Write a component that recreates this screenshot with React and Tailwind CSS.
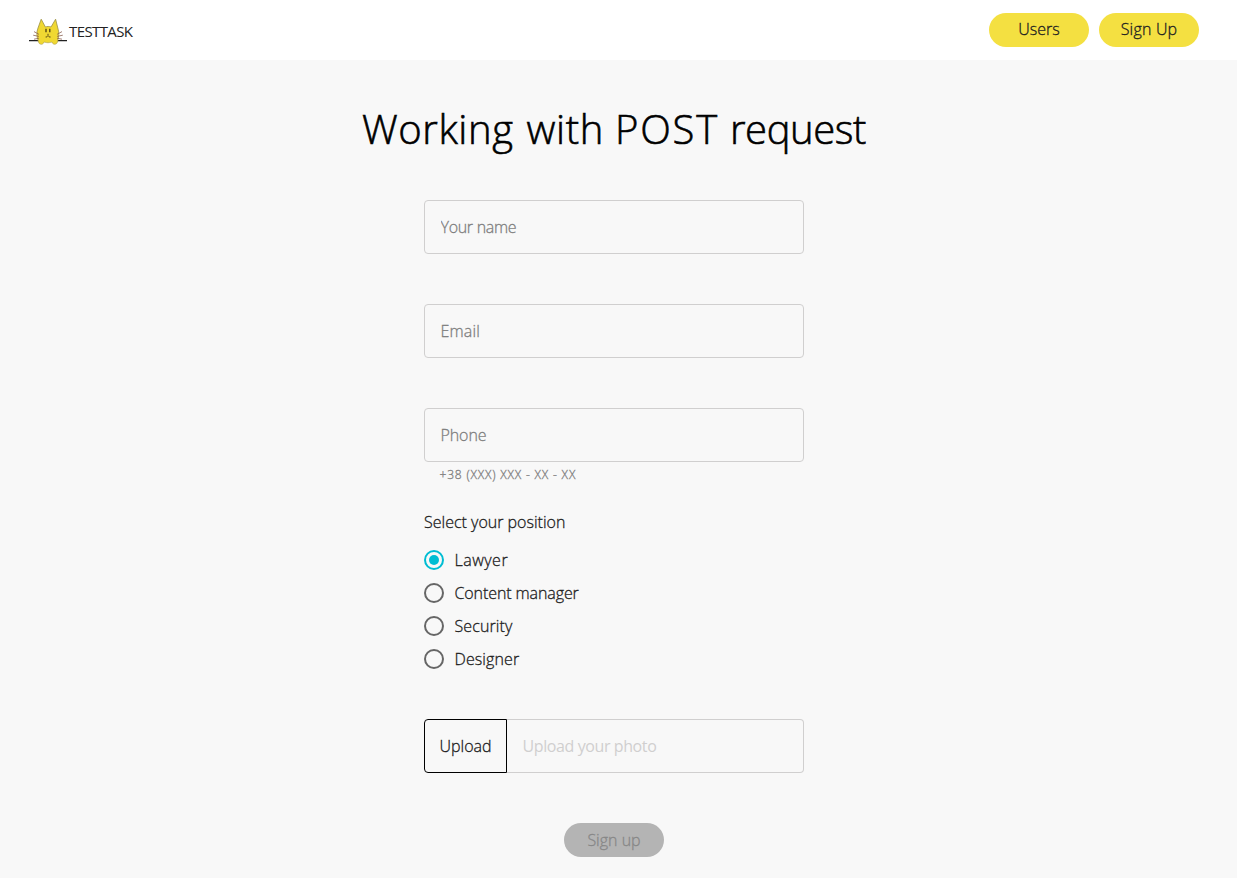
import { useState } from "react";

const positions = [
  { name: "Lawyer", tracking: "tracking-[0.5px]" },
  { name: "Content manager", tracking: "tracking-[-0.1px]" },
  { name: "Security", tracking: "tracking-[0.1px]" },
  { name: "Designer", tracking: "tracking-[0.1px]" },
];

function CatLogo() {
  return (
    <svg className="h-7 w-[38px]" viewBox="0 0 38 28" fill="none">
      <path d="M0 22.6H38" stroke="#222" strokeWidth="1.2" />
      <path
        d="M9.4 23C7.6 19 7.4 14 9 10L12.2 1.2L16.4 9C18 8.3 20.5 8.3 22 9L26.6 1.2L28.8 10C30.2 14 30 19 28.6 23Z"
        fill="#f0d832"
        stroke="#9a8f42"
        strokeWidth=".8"
      />
      <path
        d="M9.2 22C9 26.8 13.6 27.8 15.2 24C18 25 20 25 22.8 24C24.4 27.8 29 26.8 28.8 22Z"
        fill="#f0d832"
      />
      <path
        d="M9.2 22C9 26.8 13.6 27.8 15.2 24C18 25 20 25 22.8 24C24.4 27.8 29 26.8 28.8 22"
        stroke="#9a8f42"
        strokeWidth=".5"
      />
      <path d="M17 10.8V14.2M20.8 10.8V14.2" stroke="#4c3e12" strokeWidth="1.3" />
      <path d="M19 15.8V17.6M16.6 19C17.6 19.6 18.6 17.8 19 17.6C19.4 17.8 20.4 19.6 21.6 19" stroke="#4c3e12" strokeWidth=".9" />
      <path
        d="M5 13.6L10 16.4M4.2 17.2L10 18.4M5 21.2L10 20.2M33 13.6L28 16.4M33.8 17.2L28 18.4M33 21.2L28 20.2"
        stroke="#8b6252"
        strokeWidth=".8"
      />
    </svg>
  );
}

function Field({ label, type, tracking }) {
  return (
    <input
      type={type}
      placeholder={label}
      className={
        "block h-[54px] w-full rounded border border-[#d0cfcf] bg-[#f8f8f8] pr-4 pl-[15.5px] text-base text-black outline-none placeholder:text-[#7e7e7e] " +
        tracking
      }
    />
  );
}

export default function App() {
  const [selected, setSelected] = useState("Lawyer");
  return (
    <div className="min-h-[878px] bg-[#f8f8f8] font-['Open_Sans',sans-serif] text-base leading-[26px] font-light text-[#212121] [-webkit-text-stroke:0.3px]">
      <header className="h-[60px] bg-white">
        <div className="ml-[29px] flex h-full w-[1170px] items-center justify-between">
          <a className="flex items-center" href="#top">
            <span className="mt-1"><CatLogo /></span>
            <span className="mt-px ml-0.5 text-[15px] font-normal tracking-[-0.6px] text-[#222] [-webkit-text-stroke:0]">TESTTASK</span>
          </a>
          <nav className="flex gap-2.5">
            <button className="h-[34px] w-[100px] rounded-full bg-[#f4e041] pb-0.5">Users</button>
            <button className="h-[34px] w-[100px] rounded-full bg-[#f4e041] pb-0.5 tracking-[0.2px]">Sign Up</button>
          </nav>
        </div>
      </header>
      <main className="flex w-[1228px] flex-col items-center pt-[49px]">
        <h1 className="text-[40px] leading-10 tracking-[0.6px] whitespace-nowrap text-black [-webkit-text-stroke:0.6px]">
          Working <span className="ml-0.5">with</span> <span className="tracking-[1.8px]">POST</span>{" "}
          <span className="tracking-[-0.4px]">request</span>
        </h1>
        <form className="mt-[51px] flex w-[380px] flex-col">
          <div className="flex flex-col gap-[50px]">
            <Field label="Your name" type="text" tracking="tracking-[-0.3px]" />
            <Field label="Email" type="email" tracking="tracking-[0.2px]" />
            <Field label="Phone" type="tel" tracking="tracking-[-0.1px]" />
          </div>
          <p className="mt-1.5 pl-[15.5px] text-xs leading-[14px] tracking-[0.81px] text-[#7e7e7e]">+38 (XXX) XXX - XX - XX</p>
          <p className="mt-[27px]">Select your position</p>
          <div className="mt-3 flex flex-col gap-[7px]">
            {positions.map((p) => (
              <label key={p.name} className="flex items-center">
                <input
                  type="radio"
                  name="position"
                  checked={selected === p.name}
                  onChange={() => setSelected(p.name)}
                  className="peer sr-only"
                />
                <span className="flex size-5 items-center justify-center rounded-full border-2 border-[#666] after:hidden after:size-2.5 after:rounded-full after:bg-[#00bdd3] peer-checked:border-[#00bdd3] peer-checked:after:block" />
                <span className={"ml-[10.5px] " + p.tracking}>{p.name}</span>
              </label>
            ))}
          </div>
          <div className="mt-[47px] flex h-[54px]">
            <button type="button" className="w-[83px] rounded-l border border-black">Upload</button>
            <span className="flex flex-1 items-center rounded-r border border-l-0 border-[#d0cfcf] pl-[15.5px] font-normal tracking-[-0.4px] text-[#d0cfcf] [-webkit-text-stroke:0]">Upload your photo</span>
          </div>
          <button type="button" disabled className="mt-[50px] h-[34px] w-[100px] self-center rounded-full bg-[#b4b4b4] text-[#878787]">Sign up</button>
        </form>
      </main>
    </div>
  );
}
